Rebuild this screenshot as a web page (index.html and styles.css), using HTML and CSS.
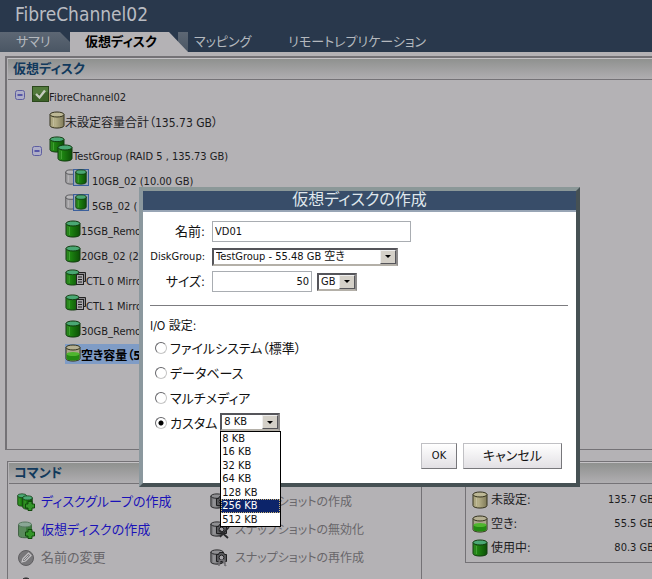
FILE: index.html
```html
<!DOCTYPE html>
<html lang="ja">
<head>
  <meta charset="UTF-8" />
  <meta name="viewport" content="width=device-width, initial-scale=1.0"/>
  <title>FibreChannel02</title>
  <link rel="stylesheet" href="styles.css">
</head>
<body>

  <!-- icon set -->
  <svg class="defs" aria-hidden="true">
    <linearGradient id="gGreen" x1="0" x2="1" y1="0" y2="0">
      <stop offset="0" stop-color="#2f8a22"/><stop offset=".35" stop-color="#1c8210"/><stop offset="1" stop-color="#0c4f06"/>
    </linearGradient>
    <linearGradient id="gBeige" x1="0" x2="1" y1="0" y2="0">
      <stop offset="0" stop-color="#a8a27c"/><stop offset=".4" stop-color="#b5af88"/><stop offset="1" stop-color="#7f7a58"/>
    </linearGradient>
    <linearGradient id="gGrey" x1="0" x2="1" y1="0" y2="0">
      <stop offset="0" stop-color="#77777a"/><stop offset=".4" stop-color="#8c8c8f"/><stop offset="1" stop-color="#2c2c2f"/>
    </linearGradient>
    <symbol id="cyl-green" viewBox="0 0 16 18" preserveAspectRatio="none">
      <path d="M1 3.5v11c0 3.4 14 3.4 14 0v-11z" fill="url(#gGreen)" stroke="#123c10"/>
      <ellipse cx="8" cy="3.5" rx="7" ry="2.5" fill="#4aa874" stroke="#123c10"/>
      <path d="M4.5 7v8" stroke="#43a035"/>
    </symbol>
    <symbol id="cyl-beige" viewBox="0 0 16 18" preserveAspectRatio="none">
      <path d="M1 3.5v11c0 3.4 14 3.4 14 0v-11z" fill="url(#gBeige)" stroke="#34321e"/>
      <ellipse cx="8" cy="3.5" rx="7" ry="2.5" fill="#bdb896" stroke="#34321e"/>
      <path d="M4.5 7v8" stroke="#c2bd9c"/>
    </symbol>
    <symbol id="cyl-half" viewBox="0 0 16 18" preserveAspectRatio="none">
      <path d="M1 3.5v11c0 3.4 14 3.4 14 0v-11z" fill="#a9a58b" stroke="#34321e"/>
      <path d="M1.5 10v4.500c0 2.800 13 2.800 13 0v-4.500z" fill="#238a12"/>
      <ellipse cx="8" cy="10" rx="6.500" ry="2" fill="#4fb52e"/>
      <ellipse cx="8" cy="3.5" rx="7" ry="2.5" fill="#b5b093" stroke="#34321e"/>
    </symbol>
    <symbol id="cyl-grey" viewBox="0 0 16 18" preserveAspectRatio="none">
      <path d="M1 3.5v11c0 3.4 14 3.4 14 0v-11z" fill="url(#gGrey)" stroke="#1e1e20"/>
      <ellipse cx="8" cy="3.5" rx="7" ry="2.5" fill="#8f8f92" stroke="#1e1e20"/>
      <path d="M4.5 7v8" stroke="#a2a2a5"/>
    </symbol>
    <symbol id="cyl-empty" viewBox="0 0 16 18" preserveAspectRatio="none">
      <path d="M1 3.5v11c0 3.4 14 3.4 14 0v-11z" fill="#a3a2a4" stroke="#4c4c50"/>
      <ellipse cx="8" cy="3.5" rx="7" ry="2.5" fill="#b9b8ba" stroke="#4c4c50"/>
      <path d="M4.5 7v8" stroke="#bdbcbe"/>
    </symbol>
    <symbol id="check" viewBox="0 0 17 16">
      <rect x=".5" y=".5" width="16" height="15" fill="#3c6229" stroke="#2b471d"/>
      <path d="M1 1h15v5L1 9z" fill="#527a3c"/>
      <path d="M4 8l3.5 3.5L13 4.5" fill="none" stroke="#c6ccc0" stroke-width="2.4"/>
    </symbol>
    <symbol id="minus" viewBox="0 0 10 10">
      <rect x=".5" y=".5" width="9" height="9" rx="2" fill="#aeaec6" stroke="#5d5da0"/>
      <path d="M2.5 5h5" stroke="#30309a" stroke-width="1.4"/>
    </symbol>
    <symbol id="group" viewBox="0 0 24 26">
      <use href="#cyl-green" x="0" y="0" width="16" height="17"/>
      <use href="#cyl-green" x="8" y="8" width="16" height="18"/>
    </symbol>
    <symbol id="snap" viewBox="0 0 24 18">
      <use href="#cyl-empty" x="0" y="1" width="12" height="16"/>
      <rect x="8.5" y="1.5" width="15" height="16" fill="#98a3b5" stroke="#3b5f9c"/>
      <use href="#cyl-green" x="10" y="1" width="12" height="16"/>
    </symbol>
    <symbol id="mirror" viewBox="0 0 21 18">
      <use href="#cyl-green" x="0" y="0" width="15" height="17"/>
      <path d="M13.500 3.500h7v9h-3" fill="#8c8a8e" stroke="#222"/>
      <rect x="11.500" y="5.500" width="7" height="10" fill="#aaa8ac" stroke="#222"/>
      <path d="M13 8h4M13 10.500h4M13 13h4" stroke="#222"/>
    </symbol>
    <symbol id="plus" viewBox="0 0 10 10">
      <path d="M3 .5h4v2.500h2.500v4H7v2.500H3V7H.5V3H3z" fill="#35952a" stroke="#114a0c"/>
    </symbol>
    <symbol id="group-add" viewBox="0 0 18 18">
      <use href="#cyl-green" x="0" y="0" width="10" height="14"/>
      <use href="#cyl-green" x="5" y="2" width="11" height="15"/>
      <use href="#plus" x="8" y="8" width="10" height="10"/>
    </symbol>
    <symbol id="disk-add" viewBox="0 0 18 18">
      <path d="M1.5 3.500v11c0 3 13 3 13 0v-11z" fill="#5a8a5c" stroke="#446247"/>
      <path d="M9 3.500h5.500v11c0 1.500-3 2.300-5.500 2.300z" fill="#3b7a3b"/>
      <ellipse cx="8" cy="3.500" rx="6.500" ry="2.500" fill="#8aa796" stroke="#587a60"/>
      <use href="#plus" x="8" y="8" width="10" height="10"/>
    </symbol>
    <symbol id="pencil" viewBox="0 0 18 18">
      <circle cx="9" cy="9" r="7.500" fill="#78777a" stroke="#5f5e61"/>
      <path d="M5 13l1-3.500 5.500-5.500 2.500 2.500L8.500 12z" fill="none" stroke="#c3c1c4" stroke-width="1.200"/>
      <path d="M7 11l4.500-4.500" stroke="#c3c1c4"/>
    </symbol>
    <symbol id="trash" viewBox="0 0 18 18">
      <path d="M5 4c0-4 8-4 8 0v12H5z" fill="#4a4a4d" stroke="#1e1e20"/>
    </symbol>
    <symbol id="camera" viewBox="0 0 20 18">
      <use href="#cyl-grey" x="0" y="0" width="14" height="16"/>
      <path d="M6.500 5.500h2l1-2h4l1 2h2v7h-10z" fill="#59595c" stroke="#1e1e20"/>
      <circle cx="11.500" cy="8.500" r="2.400" fill="#a6a4a8" stroke="#1e1e20"/>
    </symbol>
    <symbol id="camera-off" viewBox="0 0 20 18">
      <use href="#camera" x="0" y="0" width="20" height="18"/>
      <path d="M9 9l9 8M19 6l-9 10" stroke="#2b2b2d" stroke-width="1.800"/>
    </symbol>
    <symbol id="camera-redo" viewBox="0 0 20 18">
      <use href="#camera" x="0" y="0" width="20" height="18"/>
      <path d="M9 17v-3a3 3 0 0 1 6 0v3M13 12l3 5" fill="none" stroke="#727074" stroke-width="1.600"/>
    </symbol>
  </svg>

  <header class="top">
    <h1>FibreChannel02</h1>
    <nav class="tabs">
      <a href="#" class="tab tab-first">サマリ</a>
      <a href="#" class="tab tab-active"><span>仮想ディスク</span></a>
      <a href="#" class="tab">マッピング</a>
      <a href="#" class="tab tab-last">リモートレプリケーション</a>
    </nav>
  </header>

  <main>
    <section class="panel tree-panel">
      <h2>仮想ディスク</h2>
      <ul class="tree">
        <li><svg class="exp"><use href="#minus"/></svg><svg class="i-check"><use href="#check"/></svg>FibreChannel02</li>
        <li class="lv1 total"><svg class="i-cyl"><use href="#cyl-beige"/></svg>未設定容量合計（135.73 GB）</li>
        <li class="lv1 tall"><svg class="exp"><use href="#minus"/></svg><svg class="i-group"><use href="#group"/></svg>TestGroup (RAID 5 , 135.73 GB)</li>
        <li class="lv2"><svg class="i-snap"><use href="#snap"/></svg>10GB_02 (10.00 GB)</li>
        <li class="lv2"><svg class="i-snap"><use href="#snap"/></svg>5GB_02 (</li>
        <li class="lv2"><svg class="i-cyl"><use href="#cyl-green"/></svg>15GB_Remote</li>
        <li class="lv2"><svg class="i-cyl"><use href="#cyl-green"/></svg>20GB_02 (20.00 GB)</li>
        <li class="lv2"><svg class="i-mirror"><use href="#mirror"/></svg>CTL 0 Mirror</li>
        <li class="lv2"><svg class="i-mirror"><use href="#mirror"/></svg>CTL 1 Mirror</li>
        <li class="lv2"><svg class="i-cyl"><use href="#cyl-green"/></svg>30GB_Remote</li>
        <li class="lv2"><span class="selected"><svg class="i-cyl"><use href="#cyl-half"/></svg>空き容量（55.48 GB）</span></li>
      </ul>
    </section>

    <section class="panel cmd-panel">
      <h2>コマンド</h2>
      <div class="cmd-body">
        <ul class="cmds">
          <li><svg><use href="#group-add"/></svg><a href="#">ディスクグループの作成</a></li>
          <li><svg><use href="#disk-add"/></svg><a href="#">仮想ディスクの作成</a></li>
          <li class="off"><svg><use href="#pencil"/></svg>名前の変更</li>
          <li class="off"><svg><use href="#trash"/></svg></li>
        </ul>
        <ul class="cmds cmds-snap">
          <li class="off"><svg><use href="#camera"/></svg>スナップショットの作成</li>
          <li class="off"><svg><use href="#camera-off"/></svg>スナップショットの無効化</li>
          <li class="off"><svg><use href="#camera-redo"/></svg>スナップショットの再作成</li>
        </ul>
        <div class="usage">
          <dl>
            <div><dt><svg class="i-cyl"><use href="#cyl-beige"/></svg>未設定:</dt><dd>135.7 GB</dd></div>
            <div><dt><svg class="i-cyl"><use href="#cyl-half"/></svg>空き:</dt><dd>55.5 GB</dd></div>
            <div><dt><svg class="i-cyl"><use href="#cyl-green"/></svg>使用中:</dt><dd>80.3 GB</dd></div>
          </dl>
        </div>
      </div>
    </section>
  </main>

  <form class="dialog" role="dialog" aria-labelledby="dlgTitle">
    <h2 id="dlgTitle">仮想ディスクの作成</h2>
    <div class="dlg-body">
      <div class="fields">
        <label for="name">名前:</label>
        <div class="ctl"><input type="text" id="name" class="box w-name" value="VD01"></div>
        <label for="group" class="latin">DiskGroup:</label>
        <div class="ctl">
          <div class="select w-group">
            <select id="group"><option>TestGroup - 55.48 GB 空き</option></select><span class="arrow"></span>
          </div>
        </div>
        <label for="size">サイズ:</label>
        <div class="ctl">
          <input type="text" id="size" class="box w-size" value="50">
          <div class="select w-unit">
            <select aria-label="単位"><option>GB</option></select><span class="arrow"></span>
          </div>
        </div>
      </div>

      <fieldset>
        <legend>I/O 設定:</legend>
        <div class="opt"><input type="radio" name="io" id="ioFs"><label for="ioFs">ファイルシステム（標準）</label></div>
        <div class="opt"><input type="radio" name="io" id="ioDb"><label for="ioDb">データベース</label></div>
        <div class="opt"><input type="radio" name="io" id="ioMm"><label for="ioMm">マルチメディア</label></div>
        <div class="opt">
          <input type="radio" name="io" id="ioCustom" checked><label for="ioCustom">カスタム</label>
          <div class="select w-kb">
            <select aria-label="カスタム"><option>8 KB</option></select><span class="arrow"></span>
            <ul class="list" role="listbox">
              <li>8 KB</li>
              <li>16 KB</li>
              <li>32 KB</li>
              <li>64 KB</li>
              <li>128 KB</li>
              <li class="on">256 KB</li>
              <li>512 KB</li>
            </ul>
          </div>
        </div>
      </fieldset>

      <div class="buttons">
        <button type="button">OK</button>
        <button type="button" class="wide">キャンセル</button>
      </div>
    </div>
  </form>

</body>
</html>
```
FILE: styles.css
```css
* { box-sizing: border-box; }
body {
  margin: 0;
  min-height: 100vh;
  position: relative;
  overflow: hidden;
  background: #b4b2b5;
  color: #1c1c1e;
  font: 13px/14px "DejaVu Sans Condensed", "Noto Sans CJK JP", sans-serif;
  font-feature-settings: "palt";
}
ul, dl, dd, h1, h2 { margin: 0; padding: 0; list-style: none; }
a { text-decoration: none; }
svg { flex: none; }
.defs { position: absolute; width: 0; height: 0; }

/* header */
.top { height: 52px; overflow: hidden; background: #29384c; }
h1 {
  height: 32px;
  padding-left: 15px;
  color: #b9bcc2;
  font-size: 19px;
  font-weight: normal;
  line-height: 28px;
}
.tabs { display: flex; height: 20px; }
.tab {
  padding: 0 18px 0 6px;
  color: #b4b8be;
  line-height: 20px;
}
.tab-first {
  width: 70px;
  padding-left: 16px;
  background: linear-gradient(#5d6774, #4a5664);
  clip-path: polygon(0 0, 60px 0, 100% 10px, 100% 100%, 0 100%);
}
.tab-active {
  width: 118px;
  padding: 0;
  background: linear-gradient(#5d6774, #4a5664) right / 10px 100% no-repeat;
  color: #000;
  font-weight: bold;
}
.tab-active span {
  display: block;
  padding-left: 15px;
  background: #b4b2b5;
  clip-path: polygon(0 0, 99px 0, 100% 100%, 0 100%);
}
.tab-last { padding-left: 19px; }

/* panels */
main { padding: 4px 0 0 5px; }
.panel { border-left: 2px solid #747276; border-top: 2px solid #747276; }
.panel h2 {
  height: 22px;
  margin-left: 1px;
  padding: 1px 0 0 5px;
  border-top: 1px solid #c4c2c5;
  border-bottom: 1px solid #757377;
  background: linear-gradient(#8f918f, #b0aeb1);
  color: #11395c;
  font-size: 13px;
  line-height: 18px;
}
.tree-panel { min-height: 394px; border-bottom: 1px solid #747276; }
.tree { padding: 0 0 10px 8px; font-size: 11px; }
.tree li { display: flex; align-items: flex-end; height: 25px; white-space: nowrap; }
.tree .lv1 { padding-left: 34px; }
.tree .total { font-size: 12px; }
.tree .tall { height: 34px; padding-left: 17px; }
.tree .lv2 { padding-left: 50px; }
.exp { width: 10px; height: 10px; margin: 0 7px 5px 0; }
.tall .exp { margin-bottom: 8px; }
.i-check { width: 17px; height: 16px; margin-bottom: 3px; }
.i-cyl { width: 16px; height: 18px; margin-bottom: 1px; }
.i-group { width: 24px; height: 26px; margin-bottom: 2px; }
.i-snap { width: 24px; height: 18px; margin: 0 3px 3px 0; }
.i-mirror { width: 21px; height: 18px; margin-bottom: 2px; }
.selected {
  display: flex;
  align-items: flex-end;
  padding-bottom: 1px;
  background: #7f9cc6;
  color: #000;
  font-size: 12px;
  font-weight: bold;
}

.cmd-panel { margin: 11px 0 0 2px; border-width: 1px; }
.cmd-body { display: flex; }
.cmds { width: 193px; padding: 4px 0 0 9px; }
.cmds li { display: flex; align-items: center; height: 28px; white-space: nowrap; }
.cmds svg { width: 18px; height: 18px; margin-right: 6px; }
.cmds a { color: #1a12b8; }
.cmds .off { color: #68666a; }
.cmds-snap { width: 220px; font-size: 12px; }
.cmds-snap svg { width: 20px; margin-right: 5px; }
.usage { flex: 1; padding-left: 43px; border-left: 1px solid #747276; }
dl {
  margin-right: -2px;
  padding: 4px 0 2px 6px;
  border-left: 1px solid #747276;
  border-bottom: 1px solid #747276;
}
dl div { display: flex; justify-content: space-between; height: 24px; }
dt { display: flex; align-items: center; font-size: 12px; }
dt svg { margin-right: 3px; }
dd { font-size: 11px; line-height: 24px; }

/* dialog, lies over the page */
.dialog {
  position: absolute;
  left: 139px;
  top: 187px;
  width: 441px;
  border: 4px solid;
  border-color: #8b9898 #465154 #465154 #8b989e;
  background: #fff;
  color: #111;
}
.dialog h2 {
  height: 21px;
  border-bottom: 2px solid #98a5b5;
  background: #384d69;
  color: #dfe6ec;
  font-size: 16px;
  font-weight: normal;
  line-height: 18px;
  text-align: center;
}
.dlg-body { padding: 7px 8px 14px 7px; }
.fields {
  display: grid;
  grid-template-columns: 55px 1fr;
  grid-auto-rows: 25px;
  column-gap: 7px;
  align-items: center;
  margin-bottom: 11px;
}
.fields label { justify-self: end; white-space: nowrap; }
.fields .latin { font-size: 11px; }
.ctl { display: flex; align-items: center; gap: 5px; }
input, select, button { margin: 0; color: #111; font: inherit; font-feature-settings: inherit; }
.box {
  height: 21px;
  padding: 0 2px;
  border: 1px solid #a9adb2;
  background: #fff;
  font-size: 11px;
}
.w-name { width: 199px; }
.w-size { width: 100px; text-align: right; }
.select {
  position: relative;
  display: flex;
  height: 18px;
  border: 2px solid;
  border-color: #55555a #8c8a8a #b4b0a8 #55555a;
  background: #fff;
}
.select select {
  flex: 1;
  min-width: 0;
  padding: 0 0 0 2px;
  border: 0;
  background: none;
  appearance: none;
  font-size: 11px;
  line-height: 14px;
}
.arrow {
  display: flex;
  align-items: center;
  justify-content: center;
  width: 16px;
  border: 1px solid;
  border-color: #eee #55555a #55555a #eee;
  background: #d4d0c8;
}
.arrow::before {
  content: "";
  border: 3px solid transparent;
  border-top-color: #000;
  border-bottom: 0;
}
.w-group { width: 186px; }
.w-unit { width: 40px; }
.w-kb { width: 60px; margin: 0 0 3px 3px; }
fieldset { margin: 0; padding: 0; border: 0; border-top: 1px solid #7c7c80; }
legend { float: left; width: 100%; padding: 13px 0 3px; font-size: 12px; }
.opt { display: flex; clear: both; align-items: center; height: 25px; padding-left: 5px; }
.opt label { white-space: nowrap; }
.opt input {
  width: 12px;
  height: 12px;
  margin: 0 3px 2px 0;
  border: 1px solid;
  border-color: #66666a #c4c4c4 #c4c4c4 #66666a;
  border-radius: 50%;
  background: #fff;
  appearance: none;
}
.opt input:checked { background: radial-gradient(#000 2px, #fff 3px); }
.list {
  position: absolute;
  left: -2px;
  top: 16px;
  z-index: 1;
  display: grid;
  width: 61px;
  height: 96px;
  border: 1px solid #000;
  background: #fff;
  font-size: 11px;
}
.list li { padding-left: 1px; line-height: 13px; }
.list .on { background: #0c246a; color: #fff; outline: 1px dotted #c8b070; outline-offset: -1px; }
.buttons { display: flex; justify-content: flex-end; gap: 6px; padding: 7px 6px 0 0; }
button {
  width: 36px;
  height: 26px;
  padding: 0;
  border: 1px solid;
  border-color: #c0c0c4 #77777b #77777b #c0c0c4;
  background: linear-gradient(#fff, #e2e0e4);
  font-size: 11px;
}
.wide { width: 99px; font-size: 13px; }
```
